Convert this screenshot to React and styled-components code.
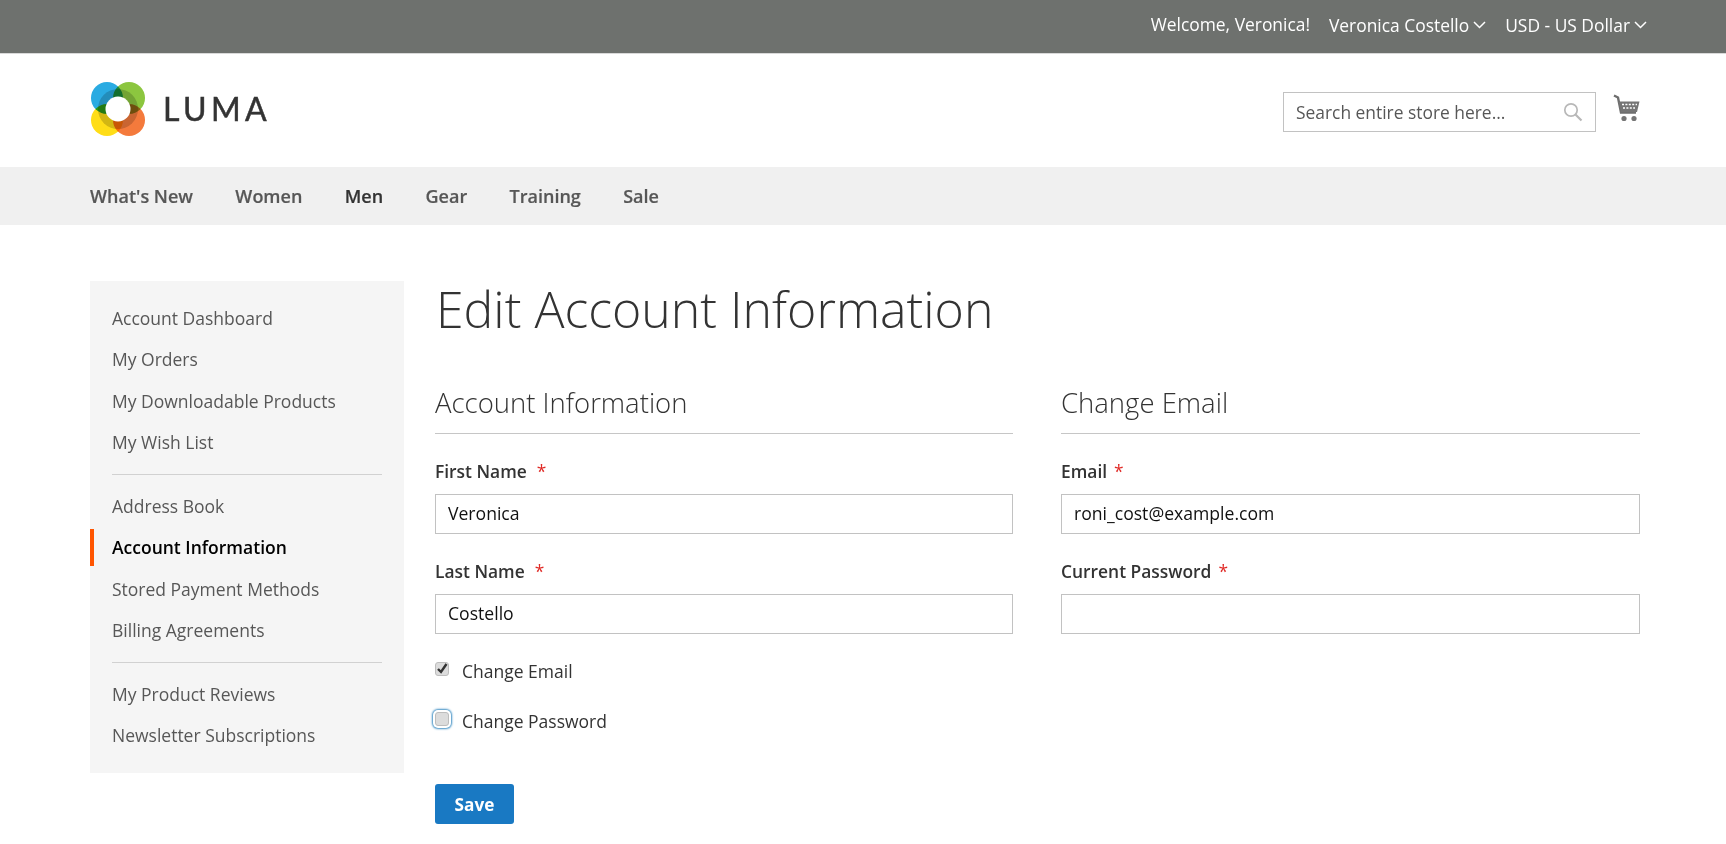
import React from "react";
import styled, { createGlobalStyle } from "styled-components";

const Global = createGlobalStyle`
  html, body { margin: 0; padding: 0; background: #fff; }
  body { font-family: "Open Sans", "Noto Sans", sans-serif; color: #333; }
  * { box-sizing: border-box; }
`;

const Page = styled.div`
  width: 1726px;
  height: 844px;
  overflow: hidden;
`;
const Container = styled.div`
  padding: 0 86px 0 90px;
`;
const TopBar = styled.div`
  height: 54px;
  background: #6e716e;
  color: #fff;
  font-size: 17.4px;
  display: flex;
  justify-content: flex-end;
  align-items: center;
  gap: 19px;
  padding: 0 79px 3px 0;
  border-bottom: 1px solid #d9d9d9;
`;
const TopItem = styled.span`
  display: inline-flex;
  align-items: center;
  gap: 4px;
  position: relative;
  top: ${(p) => (p.$raised ? "-1px" : "0")};
`;
const Header = styled(Container)`
  height: 113px;
  display: flex;
  align-items: center;
  justify-content: space-between;
`;
const Brand = styled.div`
  display: flex;
  align-items: center;
  gap: 20px;
  margin-top: -4px;
  margin-left: 1px;
`;
const BrandName = styled.span`
  font-family: "Lato", sans-serif;
  font-size: 32px;
  font-weight: 400;
  letter-spacing: 4.4px;
  color: #333;
  margin-left: -2px;
  -webkit-text-stroke: 0.5px #333;
`;
const HeaderTools = styled.div`
  display: flex;
  align-items: flex-start;
  gap: 17px;
  margin-top: 2px;
`;
const SearchBox = styled.div`
  width: 313px;
  height: 40px;
  border: 1px solid #c2c2c2;
  display: flex;
  align-items: center;
  justify-content: space-between;
  padding: 0 12px;
  font-size: 17.4px;
  color: #575757;
`;
const CartSlot = styled.span`
  display: block;
  margin-top: 2px;
`;
const Nav = styled(Container)`
  height: 58px;
  background: #f0f0f0;
  display: flex;
  align-items: center;
  gap: 42.4px;
`;
const NavLink = styled.a`
  font-size: 18px;
  font-weight: 600;
  -webkit-text-stroke: 0.2px currentColor;
  color: ${(p) => (p.$active ? "#333" : "#575757")};
`;
const Content = styled(Container)`
  display: flex;
  padding-top: 56px;
  gap: 31px;
`;
const Sidebar = styled.aside`
  width: 314px;
  height: 492px;
  flex: none;
  background: #f5f5f5;
  padding: 16px 0;
`;
const SideLink = styled.div`
  position: relative;
  height: 41.5px;
  padding-left: 22px;
  display: flex;
  align-items: center;
  font-size: 17.5px;
  color: ${(p) => (p.$active ? "#000" : "#575757")};
  font-weight: ${(p) => (p.$active ? 600 : 400)};
  &::before {
    content: "";
    display: ${(p) => (p.$active ? "block" : "none")};
    position: absolute;
    left: 0;
    top: 2px;
    bottom: 2px;
    width: 4px;
    background: #ff5501;
  }
`;
const SideRule = styled.div`
  height: 1px;
  background: #d1d1d1;
  margin: 11px 22px 10px;
`;
const Main = styled.main`
  flex: 1;
  min-width: 0;
`;
const Title = styled.h1`
  margin: 0 0 0 1px;
  font-size: 50px;
  line-height: 56px;
  font-weight: 300;
  color: #333;
`;
const Columns = styled.div`
  display: grid;
  grid-template-columns: 578px 579px;
  gap: 48px;
  margin-top: 48px;
`;
const Heading = styled.h2`
  margin: 0 0 24px;
  height: 49px;
  font-size: 27.5px;
  line-height: 36px;
  font-weight: 300;
  color: #333;
  border-bottom: 1px solid #c6c6c6;
`;
const Field = styled.div`
  margin-bottom: 24px;
`;
const Label = styled.label`
  display: flex;
  align-items: center;
  height: 25px;
  margin-bottom: 11px;
  font-size: 17.4px;
  font-weight: 600;
  color: #333;
`;
const Star = styled.span`
  color: #e02b27;
  font-weight: 400;
  margin-left: ${(p) => p.$gap || "7px"};
`;
const Input = styled.div`
  height: 40px;
  border: 1px solid #c2c2c2;
  padding: 0 12px 2px;
  display: flex;
  align-items: center;
  font-size: 17.6px;
  color: #111;
`;
const CheckRow = styled.div`
  display: flex;
  align-items: center;
  gap: 13px;
  height: 25px;
  margin-bottom: 25px;
  font-size: 17.5px;
  color: #333;
`;
const Check = styled.span`
  width: 14px;
  height: 14px;
  flex: none;
  background: #dcdcdc;
  border: 1px solid #bdbdbd;
  border-radius: 3px;
  display: flex;
  align-items: center;
  justify-content: center;
  margin-top: -4px;
  box-shadow: ${(p) => (p.$focus ? "0 0 0 2px #fff, 0 0 2px 3px #3f8fc4" : "none")};
`;
const SaveButton = styled.button`
  display: block;
  width: 79px;
  height: 40px;
  margin-top: 51px;
  background: #1979c3;
  color: #fff;
  border: 0;
  border-radius: 3px;
  font-family: inherit;
  font-size: 17.2px;
  font-weight: 700;
`;

const Chevron = () => (
  <svg width="13" height="8" viewBox="0 0 13 8" fill="none" stroke="#fff" strokeWidth="1.5">
    <path d="M1 1l5.5 5.5L12 1" />
  </svg>
);

const Logo = () => (
  <svg width="54" height="54" viewBox="0 0 54 54">
    <g style={{ isolation: "isolate" }}>
      <circle cx="16" cy="16" r="16" fill="#2aabe2" style={{ mixBlendMode: "multiply" }} />
      <circle cx="38" cy="16" r="16" fill="#8cc63f" style={{ mixBlendMode: "multiply" }} />
      <circle cx="16" cy="38" r="16" fill="#ffdd17" style={{ mixBlendMode: "multiply" }} />
      <circle cx="38" cy="38" r="16" fill="#f47a3c" style={{ mixBlendMode: "multiply" }} />
      <circle cx="27" cy="27" r="20" fill="#d2d2d2" style={{ mixBlendMode: "multiply" }} />
      <circle cx="27" cy="27" r="12.5" fill="#fff" />
    </g>
  </svg>
);

const SearchIcon = () => (
  <svg width="20" height="20" viewBox="0 0 20 20" fill="none" stroke="#b8b8b8" strokeWidth="1.7">
    <circle cx="8" cy="8" r="6.2" />
    <path d="M12.5 12.5L18.5 18.5" strokeWidth="2.2" />
  </svg>
);

const Cart = () => (
  <svg width="27" height="30" viewBox="0 0 27 30">
    <path d="M1 1.5l4 2 3 15h15" fill="none" stroke="#6e6e6e" strokeWidth="2.4" />
    <path d="M5.5 7.5H26.5L24 18H8z" fill="#757575" />
    <path d="M9 10.5h15M10 14h12" stroke="#fff" strokeWidth="1.6" strokeDasharray="2 1.4" />
    <circle cx="11" cy="24.5" r="2.6" fill="#757575" />
    <circle cx="21" cy="24.5" r="2.6" fill="#757575" />
  </svg>
);

const Tick = () => (
  <svg width="12" height="11" viewBox="0 0 12 11" fill="none" stroke="#333" strokeWidth="2.4">
    <path d="M2 6l3 3 5.5-8" />
  </svg>
);

const navItems = ["What's New", "Women", "Men", "Gear", "Training", "Sale"];
const sideGroups = [
  ["Account Dashboard", "My Orders", "My Downloadable Products", "My Wish List"],
  ["Address Book", "Account Information", "Stored Payment Methods", "Billing Agreements"],
  ["My Product Reviews", "Newsletter Subscriptions"],
];

export default function App() {
  return (
    <Page>
      <Global />
      <TopBar>
        <TopItem $raised>Welcome, Veronica!</TopItem>
        <TopItem>Veronica Costello <Chevron /></TopItem>
        <TopItem>USD - US Dollar <Chevron /></TopItem>
      </TopBar>
      <Header>
        <Brand>
          <Logo />
          <BrandName>LUMA</BrandName>
        </Brand>
        <HeaderTools>
          <SearchBox>
            Search entire store here...
            <SearchIcon />
          </SearchBox>
          <CartSlot><Cart /></CartSlot>
        </HeaderTools>
      </Header>
      <Nav>
        {navItems.map((n) => (
          <NavLink key={n} $active={n === "Men"}>{n}</NavLink>
        ))}
      </Nav>
      <Content>
        <Sidebar>
          {sideGroups.map((group, i) => (
            <React.Fragment key={i}>
              {i > 0 && <SideRule />}
              {group.map((s) => (
                <SideLink key={s} $active={s === "Account Information"}>{s}</SideLink>
              ))}
            </React.Fragment>
          ))}
        </Sidebar>
        <Main>
          <Title>Edit Account Information</Title>
          <Columns>
            <div>
              <Heading>Account Information</Heading>
              <Field>
                <Label>First Name <Star $gap="10px">*</Star></Label>
                <Input>Veronica</Input>
              </Field>
              <Field>
                <Label>Last Name <Star $gap="10px">*</Star></Label>
                <Input>Costello</Input>
              </Field>
              <CheckRow>
                <Check><Tick /></Check>
                Change Email
              </CheckRow>
              <CheckRow>
                <Check $focus />
                Change Password
              </CheckRow>
              <SaveButton>Save</SaveButton>
            </div>
            <div>
              <Heading>Change Email</Heading>
              <Field>
                <Label>Email <Star>*</Star></Label>
                <Input>roni_cost@example.com</Input>
              </Field>
              <Field>
                <Label>Current Password <Star>*</Star></Label>
                <Input />
              </Field>
            </div>
          </Columns>
        </Main>
      </Content>
    </Page>
  );
}
